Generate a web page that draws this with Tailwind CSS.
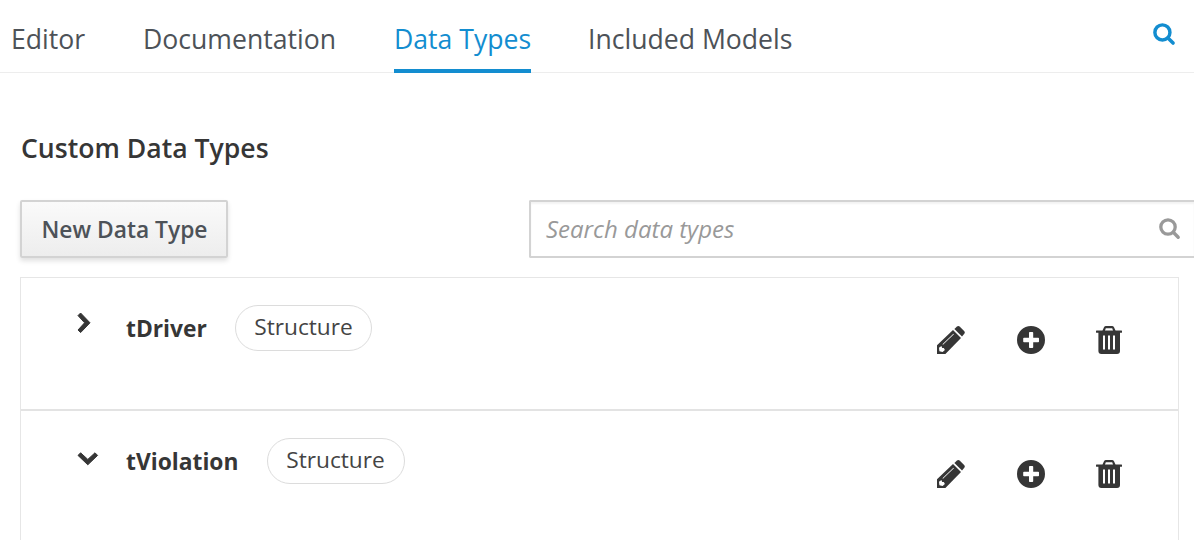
<!DOCTYPE html>
<html lang="en">
<head>
<meta charset="utf-8">
<title>Data Types</title>
<script src="https://cdn.jsdelivr.net/npm/@tailwindcss/browser@4"></script>
</head>
<body class="h-[540px] overflow-hidden bg-white font-['Open_Sans','Noto_Sans',sans-serif] text-[#363636]">
<svg class="hidden">
  <symbol id="search" viewBox="0 0 22 22"><circle cx="9" cy="9" r="7.2" fill="none" stroke="currentColor" stroke-width="3.3"/><path d="M14.300 14.300 19.200 19.200" stroke="currentColor" stroke-width="3.4" stroke-linecap="round"/></symbol>
  <symbol id="pencil" viewBox="0 0 28 28"><path fill="currentColor" fill-rule="evenodd" d="M0 28V19.200L16 4 24 12 8.400 28ZM2 21.800 2.400 25.200 5.600 25.900 7.900 24.100 6.800 21.900 5.200 22 4.400 20.100ZM6 18.700 16.900 8.300 16.400 7.800 5.500 18.200Z"/><path fill="currentColor" d="M17.400 2.900 19.700.8Q21.300-.6 22.900.8L27.100 5Q28.500 6.500 27.100 8.100L25 10.500Z"/></symbol>
  <symbol id="plus" viewBox="0 0 28 28"><path fill="currentColor" fill-rule="evenodd" d="M14 0a14 14 0 1 0 0 28 14 14 0 0 0 0-28ZM12.800 6h2.600q.8 0 .8.8v5h5q.8 0 .8.8v2.800q0 .8-.8.8h-5v5q0 .8-.8.8h-2.600q-.8 0-.8-.8v-5H7q-.8 0-.8-.8v-2.800q0-.8.8-.8h5v-5q0-.8.8-.8Z"/></symbol>
  <symbol id="trash" viewBox="0 0 26 28"><path fill="currentColor" fill-rule="evenodd" d="M.5 4.500h6L8 1.200Q8.600 0 10 0h6q1.400 0 2 1.200L19.500 4.500h6q.5 0 .5.5v1.200q0 .5-.5.5H24V25q0 3-3 3H5.400q-3 0-3-3V6.700H.5Q0 6.700 0 6.200V5q0-.5.500-.5ZM9 4.500h8l-.8-2.300H9.800ZM7 9.400V23.600H9V9.400ZM12 9.400V23.600h2V9.400ZM17 9.400V23.600h2V9.400Z"/></symbol>
  <symbol id="right" viewBox="0 0 14 22"><path fill="currentColor" stroke="currentColor" stroke-width="1" stroke-linejoin="round" d="M1 3.600 3.600 1 13 10.800 3.600 20.600 1 18 7.600 10.800Z"/></symbol>
  <symbol id="down" viewBox="0 0 22 14"><path fill="currentColor" stroke="currentColor" stroke-width="1" stroke-linejoin="round" d="M3.600 .8 1 3.400 10.800 12.800 20.600 3.400 18 .8 10.800 7.400Z"/></symbol>
</svg>
<nav class="flex h-[73px] justify-between border-b border-[#ededed]">
  <div class="flex gap-[58px] pl-[11px] text-[26.600px] leading-[37px] text-[#4d5258]">
    <a class="h-[73px] w-[74px] shrink-0 pt-[21px] whitespace-nowrap">Editor</a>
    <a class="h-[73px] w-[193px] shrink-0 pt-[21px] whitespace-nowrap">Documentation</a>
    <a class="h-[73px] w-[137px] shrink-0 border-b-4 border-[#138dd0] pt-[21px] whitespace-nowrap text-[#138dd0]">Data Types</a>
    <a class="-ml-px h-[73px] shrink-0 pt-[21px] whitespace-nowrap">Included Models</a>
  </div>
  <svg class="mt-[23px] mr-[18px] size-[23px] text-[#138dd0]"><use href="#search"/></svg>
</nav>
<main class="pl-5">
  <h1 class="mt-[57px] pl-px text-[26.600px] leading-9 font-semibold">Custom Data Types</h1>
  <div class="mt-[34px] flex h-[58px] justify-between">
    <button class="h-[58px] w-[208px] rounded-[2px] border-2 border-[#d3d3d3] bg-linear-to-b from-[#fafafa] to-[#ededed] pt-0.5 pl-px text-[22.800px] leading-8 font-semibold whitespace-nowrap text-[#4d5258] shadow-[0_3px_5px_rgba(3,3,3,0.12)]">New Data Type</button>
    <label class="flex w-[665px] items-center justify-between rounded-l-[2px] border-2 border-r-0 border-[#d3d3d3] pr-[13px] pl-[15px] text-[24px] text-[#999] italic shadow-[inset_0_2px_2px_rgba(3,3,3,0.05)]">
      <span>Search data types</span>
      <svg class="size-[22px]"><use href="#search"/></svg>
    </label>
  </div>
  <section class="mt-[19px] w-[1159px] border border-[#e6e6e6]">
    <div class="flex h-[133px] justify-between border-b-2 border-[#e3e3e3] pr-[56px]">
      <div class="flex pl-[56px]">
        <svg class="mt-[34px] h-[22px] w-[14px]"><use href="#right"/></svg>
        <b class="mt-[35px] ml-[35px] w-[80px] text-[22.800px] leading-8 whitespace-nowrap">tDriver</b>
        <span class="mt-[27px] ml-[29px] h-[46px] w-[137px] rounded-full border border-[#dcdcdc] text-center text-[22.700px] leading-[42px] text-[#444]">Structure</span>
      </div>
      <div class="flex pt-[48px]">
        <svg class="mr-[52px] size-7"><use href="#pencil"/></svg>
        <svg class="mr-[51px] size-[28px]"><use href="#plus"/></svg>
        <svg class="h-7 w-[26px]"><use href="#trash"/></svg>
      </div>
    </div>
    <div class="flex h-[133px] justify-between pr-[56px]">
      <div class="flex pl-[56px]">
        <svg class="mt-[41px] h-[14px] w-[22px]"><use href="#down"/></svg>
        <b class="mt-[35px] ml-[27px] w-[112px] text-[22.800px] leading-8 whitespace-nowrap">tViolation</b>
        <span class="mt-[27px] ml-[29px] h-[46px] w-[138px] rounded-full border border-[#dcdcdc] pr-px text-center text-[22.700px] leading-[42px] text-[#444]">Structure</span>
      </div>
      <div class="flex pt-[49px]">
        <svg class="mr-[52px] size-7"><use href="#pencil"/></svg>
        <svg class="mr-[51px] size-[28px]"><use href="#plus"/></svg>
        <svg class="h-7 w-[26px]"><use href="#trash"/></svg>
      </div>
    </div>
  </section>
</main>
</body>
</html>
